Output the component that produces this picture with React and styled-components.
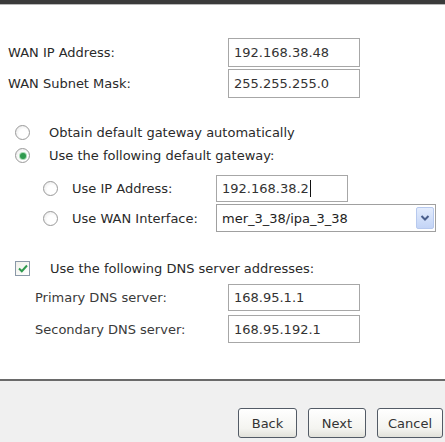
import React from 'react'
import styled, { createGlobalStyle } from 'styled-components'

const GlobalStyle = createGlobalStyle`
  html, body {
    margin:0;
    padding:0;
    background:#ffffff;
  }
  body {
    font-family:"DejaVu Sans", Verdana, sans-serif;
    font-size:13px;
    color:#2a2a2a;
  }
`

const Page = styled.div`
  width:445px;
  height:442px;
  display:flex;
  flex-direction:column;
  overflow:hidden;
`

const TopBar = styled.div`
  height:4px;
  background:#3a3a3a;
  border-bottom:1px solid #b8b8b8;
  flex-shrink:0;
`

const Body = styled.div`
  flex:1;
  display:flex;
  flex-direction:column;
  background:#ffffff;
`

const FieldGrid = styled.div`
  display:grid;
  grid-template-columns:${p => p.$labelWidth}px 132px;
  row-gap:${p => p.$gap}px;
  align-items:center;
  padding-left:${p => p.$indent}px;
  margin-top:${p => p.$top}px;
`

const Label = styled.span`
  white-space:nowrap;
  color:${p => p.$light ? '#3a3a3a' : '#2a2a2a'};
`

const TextBox = styled.div`
  box-sizing:border-box;
  width:${p => p.$width || 132}px;
  height:${p => p.$height || 29}px;
  border:1px solid #a7a7a7;
  background:#ffffff;
  display:flex;
  align-items:center;
  padding-left:5px;
  color:#333333;
  white-space:nowrap;
  overflow:hidden;
`

const Caret = styled.span`
  display:inline-block;
  width:1px;
  height:17px;
  background:#111111;
  margin-left:1px;
`

const RadioGroup = styled.div`
  margin-top:${p => p.$top}px;
  display:flex;
  flex-direction:column;
  row-gap:${p => p.$gap || 0}px;
`

const RadioRow = styled.div`
  display:flex;
  align-items:center;
  height:${p => p.$height || 23}px;
  padding-left:${p => p.$indent}px;
`

const RadioDot = styled.span`
  box-sizing:border-box;
  width:15px;
  height:15px;
  border-radius:50%;
  border:1px solid #9a9a9a;
  background:radial-gradient(circle at 60% 60%, #ffffff 40%, #e2e2e2 100%);
  margin-right:${p => p.$gap}px;
  display:flex;
  align-items:center;
  justify-content:center;
  flex-shrink:0;
  &::after{
    content:'';
    display:${p => p.$checked ? 'block' : 'none'};
    width:6px;
    height:6px;
    border-radius:50%;
    background:#2f9a4e;
    box-shadow:0 0 0 1px #a8dbb5;
  }
`

const SubLabel = styled.span`
  width:${p => p.$width}px;
  white-space:nowrap;
  flex-shrink:0;
`

const Select = styled.div`
  box-sizing:border-box;
  width:220px;
  height:28px;
  border:1px solid #a0a0a0;
  background:#ffffff;
  display:flex;
  align-items:center;
  justify-content:space-between;
  padding:0 1px 0 5px;
  color:#222222;
`

const SelectArrow = styled.span`
  box-sizing:border-box;
  width:18px;
  height:22px;
  border:1px solid #b7c9ee;
  border-radius:2px;
  background:linear-gradient(180deg, #e3ecfd 0%, #c3d4f6 100%);
  display:flex;
  align-items:center;
  justify-content:center;
`

const CheckRow = styled.div`
  display:flex;
  align-items:center;
  height:20px;
  margin-top:26px;
  padding-left:15px;
`

const CheckBox = styled.span`
  box-sizing:border-box;
  width:15px;
  height:15px;
  border:1px solid #8a98a8;
  background:linear-gradient(135deg, #f0f0ea 0%, #ffffff 100%);
  margin-right:20px;
  display:flex;
  align-items:center;
  justify-content:center;
`

const Footer = styled.div`
  box-sizing:border-box;
  height:63px;
  flex-shrink:0;
  border-top:2px solid #6a6a6a;
  background:#f0f0f0;
  display:flex;
  justify-content:flex-end;
  align-items:flex-start;
  gap:11px;
  padding:27px 2px 0 0;
`

const Button = styled.button`
  box-sizing:border-box;
  width:${p => p.$width}px;
  height:30px;
  border:1px solid #535b66;
  border-radius:3px;
  background:linear-gradient(180deg, #ffffff 0%, #f4f4f0 70%, #e2e2da 100%);
  font-family:"DejaVu Sans", Verdana, sans-serif;
  font-size:13px;
  color:#333333;
  padding:0;
`

const App = () => {
    return (
        <>
            <GlobalStyle />
            <Page>
                <TopBar />
                <Body>
                    <FieldGrid $labelWidth={220} $indent={8} $gap={2} $top={33}>
                        <Label>WAN IP Address:</Label>
                        <TextBox>192.168.38.48</TextBox>
                        <Label>WAN Subnet Mask:</Label>
                        <TextBox>255.255.255.0</TextBox>
                    </FieldGrid>

                    <RadioGroup $top={23}>
                        <RadioRow $indent={15}>
                            <RadioDot $gap={19} />
                            <Label>Obtain default gateway automatically</Label>
                        </RadioRow>
                        <RadioRow $indent={15}>
                            <RadioDot $gap={19} $checked />
                            <Label>Use the following default gateway:</Label>
                        </RadioRow>
                    </RadioGroup>

                    <RadioGroup $top={8} $gap={2}>
                        <RadioRow $indent={43} $height={27}>
                            <RadioDot $gap={14} />
                            <SubLabel $width={144}>Use IP Address:</SubLabel>
                            <TextBox $width={132} $height={27}>192.168.38.2<Caret /></TextBox>
                        </RadioRow>
                        <RadioRow $indent={43} $height={28}>
                            <RadioDot $gap={14} />
                            <SubLabel $width={144}>Use WAN Interface:</SubLabel>
                            <Select>
                                <span>mer_3_38/ipa_3_38</span>
                                <SelectArrow>
                                    <svg width="10" height="8" viewBox="0 0 10 8">
                                        <path d="M1.5 2 L5 5.5 L8.5 2" fill="none" stroke="#4a5f8c" strokeWidth="2" />
                                    </svg>
                                </SelectArrow>
                            </Select>
                        </RadioRow>
                    </RadioGroup>

                    <CheckRow>
                        <CheckBox>
                            <svg width="10" height="9" viewBox="0 0 10 9">
                                <path d="M1 4.5 L3.8 7.2 L9 1.5" fill="none" stroke="#2f9a4e" strokeWidth="2" />
                            </svg>
                        </CheckBox>
                        <Label>Use the following DNS server addresses:</Label>
                    </CheckRow>

                    <FieldGrid $labelWidth={193} $indent={35} $gap={4} $top={6}>
                        <Label $light>Primary DNS server:</Label>
                        <TextBox $height={27}>168.95.1.1</TextBox>
                        <Label $light>Secondary DNS server:</Label>
                        <TextBox $height={28}>168.95.192.1</TextBox>
                    </FieldGrid>
                </Body>
                <Footer>
                    <Button $width={59}>Back</Button>
                    <Button $width={58}>Next</Button>
                    <Button $width={66}>Cancel</Button>
                </Footer>
            </Page>
        </>
    )
}

export default App
